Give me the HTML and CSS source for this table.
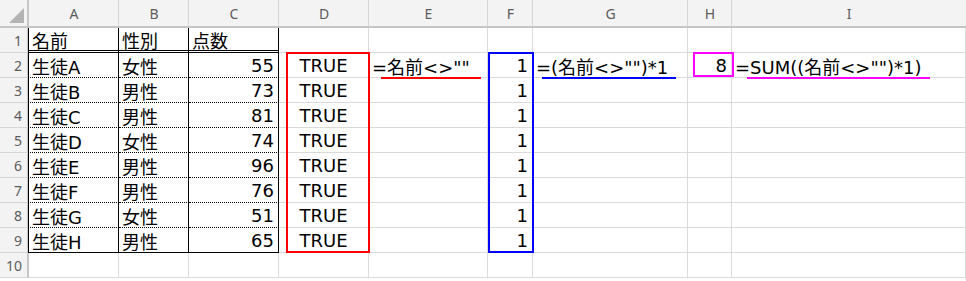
FILE: index.html
```html
<!DOCTYPE html>
<html lang="ja">
<head>
<meta charset="utf-8">
<title>Sheet</title>
<link rel="stylesheet" href="styles.css">
</head>
<body>
<div class="sheet">
  <div class="corner"><span class="tri"></span></div>
  <div class="ch">A</div><div class="ch">B</div><div class="ch">C</div><div class="ch">D</div><div class="ch">E</div><div class="ch">F</div><div class="ch">G</div><div class="ch">H</div><div class="ch last">I</div>

  <div class="rh">1</div>
  <div class="c t tl th">名前</div><div class="c t th">性別</div><div class="c t th">点数</div>
  <div class="c"></div><div class="c"></div><div class="c"></div><div class="c"></div><div class="c"></div><div class="c"></div>

  <div class="rh">2</div>
  <div class="c t tl td">生徒A</div><div class="c t td">女性</div><div class="c t td r">55</div>
  <div class="c ctr">TRUE</div><div class="c">=名前&lt;&gt;""</div><div class="c r">1</div><div class="c">=(名前&lt;&gt;"")*1</div><div class="c r">8</div><div class="c">=SUM((名前&lt;&gt;"")*1)</div>

  <div class="rh">3</div>
  <div class="c t tl td">生徒B</div><div class="c t td">男性</div><div class="c t td r">73</div>
  <div class="c ctr">TRUE</div><div class="c"></div><div class="c r">1</div><div class="c"></div><div class="c"></div><div class="c"></div>

  <div class="rh">4</div>
  <div class="c t tl td">生徒C</div><div class="c t td">男性</div><div class="c t td r">81</div>
  <div class="c ctr">TRUE</div><div class="c"></div><div class="c r">1</div><div class="c"></div><div class="c"></div><div class="c"></div>

  <div class="rh">5</div>
  <div class="c t tl td">生徒D</div><div class="c t td">女性</div><div class="c t td r">74</div>
  <div class="c ctr">TRUE</div><div class="c"></div><div class="c r">1</div><div class="c"></div><div class="c"></div><div class="c"></div>

  <div class="rh">6</div>
  <div class="c t tl td">生徒E</div><div class="c t td">男性</div><div class="c t td r">96</div>
  <div class="c ctr">TRUE</div><div class="c"></div><div class="c r">1</div><div class="c"></div><div class="c"></div><div class="c"></div>

  <div class="rh">7</div>
  <div class="c t tl td">生徒F</div><div class="c t td">男性</div><div class="c t td r">76</div>
  <div class="c ctr">TRUE</div><div class="c"></div><div class="c r">1</div><div class="c"></div><div class="c"></div><div class="c"></div>

  <div class="rh">8</div>
  <div class="c t tl td">生徒G</div><div class="c t td">女性</div><div class="c t td r">51</div>
  <div class="c ctr">TRUE</div><div class="c"></div><div class="c r">1</div><div class="c"></div><div class="c"></div><div class="c"></div>

  <div class="rh">9</div>
  <div class="c t tl tb">生徒H</div><div class="c t tb">男性</div><div class="c t tb r">65</div>
  <div class="c ctr">TRUE</div><div class="c"></div><div class="c r">1</div><div class="c"></div><div class="c"></div><div class="c"></div>

  <div class="rh">10</div>
  <div class="c"></div><div class="c"></div><div class="c"></div><div class="c"></div><div class="c"></div><div class="c"></div><div class="c"></div><div class="c"></div><div class="c"></div>

  <div class="mark box-red"></div>
  <div class="mark box-blue"></div>
  <div class="mark box-mag"></div>
  <div class="mark line-red"></div>
  <div class="mark line-blue"></div>
  <div class="mark line-mag"></div>
</div>
</body>
</html>
```

FILE: styles.css
```css
html, body {
  margin: 0;
  padding: 0;
  background: #ffffff;
}

.sheet {
  position: relative;
  display: grid;
  grid-template-columns: 29px 90px 70px 90px 90px 119px 45px 155px 44px 234px;
  grid-template-rows: 28px repeat(10, 25px);
  width: 966px;
  font-family: "DejaVu Sans", "Noto Sans CJK JP", sans-serif;
  color: #000000;
}

.corner {
  position: relative;
  background: #f3f3f3;
  border-right: 2px solid #c6c6c6;
  border-bottom: 2px solid #c6c6c6;
  box-sizing: border-box;
}

.tri {
  position: absolute;
  right: 3px;
  bottom: 3px;
  width: 0;
  height: 0;
  border-left: 15px solid transparent;
  border-bottom: 15px solid #b4b4b4;
}

.ch {
  background: #f3f3f3;
  border-bottom: 2px solid #c6c6c6;
  box-shadow: inset -1px 0 0 #d6d6d6;
  box-sizing: border-box;
  display: flex;
  align-items: center;
  justify-content: center;
  padding-top: 1px;
  font-family: "Noto Sans", sans-serif;
  font-size: 14px;
  color: #5c5c5c;
}

.ch.last {
  box-shadow: none;
}

.rh {
  background: #f3f3f3;
  border-right: 2px solid #c6c6c6;
  border-bottom: 1px solid #d6d6d6;
  box-sizing: border-box;
  display: flex;
  align-items: center;
  justify-content: flex-end;
  padding-right: 5px;
  font-family: "Noto Sans", sans-serif;
  font-size: 14px;
  color: #5c5c5c;
}

.c {
  border-right: 1px solid #dadada;
  border-bottom: 1px solid #dadada;
  box-sizing: border-box;
  display: flex;
  align-items: center;
  padding: 1px 3px 0 3px;
  font-size: 18px;
  white-space: nowrap;
  overflow: visible;
}

.c.r {
  justify-content: flex-end;
  padding-right: 4px;
}

.c.ctr {
  justify-content: center;
}

.c.t {
  border-right: 1px solid #000000;
}

.c.tl {
  border-left: 1px solid #000000;
  margin-left: -1px;
}

.c.th {
  border-bottom: 3px double #000000;
}

.c.td {
  border-bottom: 1px dotted #000000;
}

.c.tb {
  border-bottom: 1px solid #000000;
}

.mark {
  position: absolute;
  box-sizing: border-box;
  pointer-events: none;
}

.box-red {
  left: 286px;
  top: 52px;
  width: 84px;
  height: 201px;
  border: 2px solid #ff0000;
}

.box-blue {
  left: 488px;
  top: 52px;
  width: 46px;
  height: 201px;
  border: 2px solid #0000ff;
}

.box-mag {
  left: 693px;
  top: 52px;
  width: 41px;
  height: 25px;
  border: 2px solid #ff00ff;
}

.line-red {
  left: 381px;
  top: 77px;
  width: 100px;
  height: 2px;
  background: #ff0000;
}

.line-blue {
  left: 542px;
  top: 77px;
  width: 134px;
  height: 2px;
  background: #0000ff;
}

.line-mag {
  left: 747px;
  top: 77px;
  width: 183px;
  height: 2px;
  background: #ff00ff;
}
```
